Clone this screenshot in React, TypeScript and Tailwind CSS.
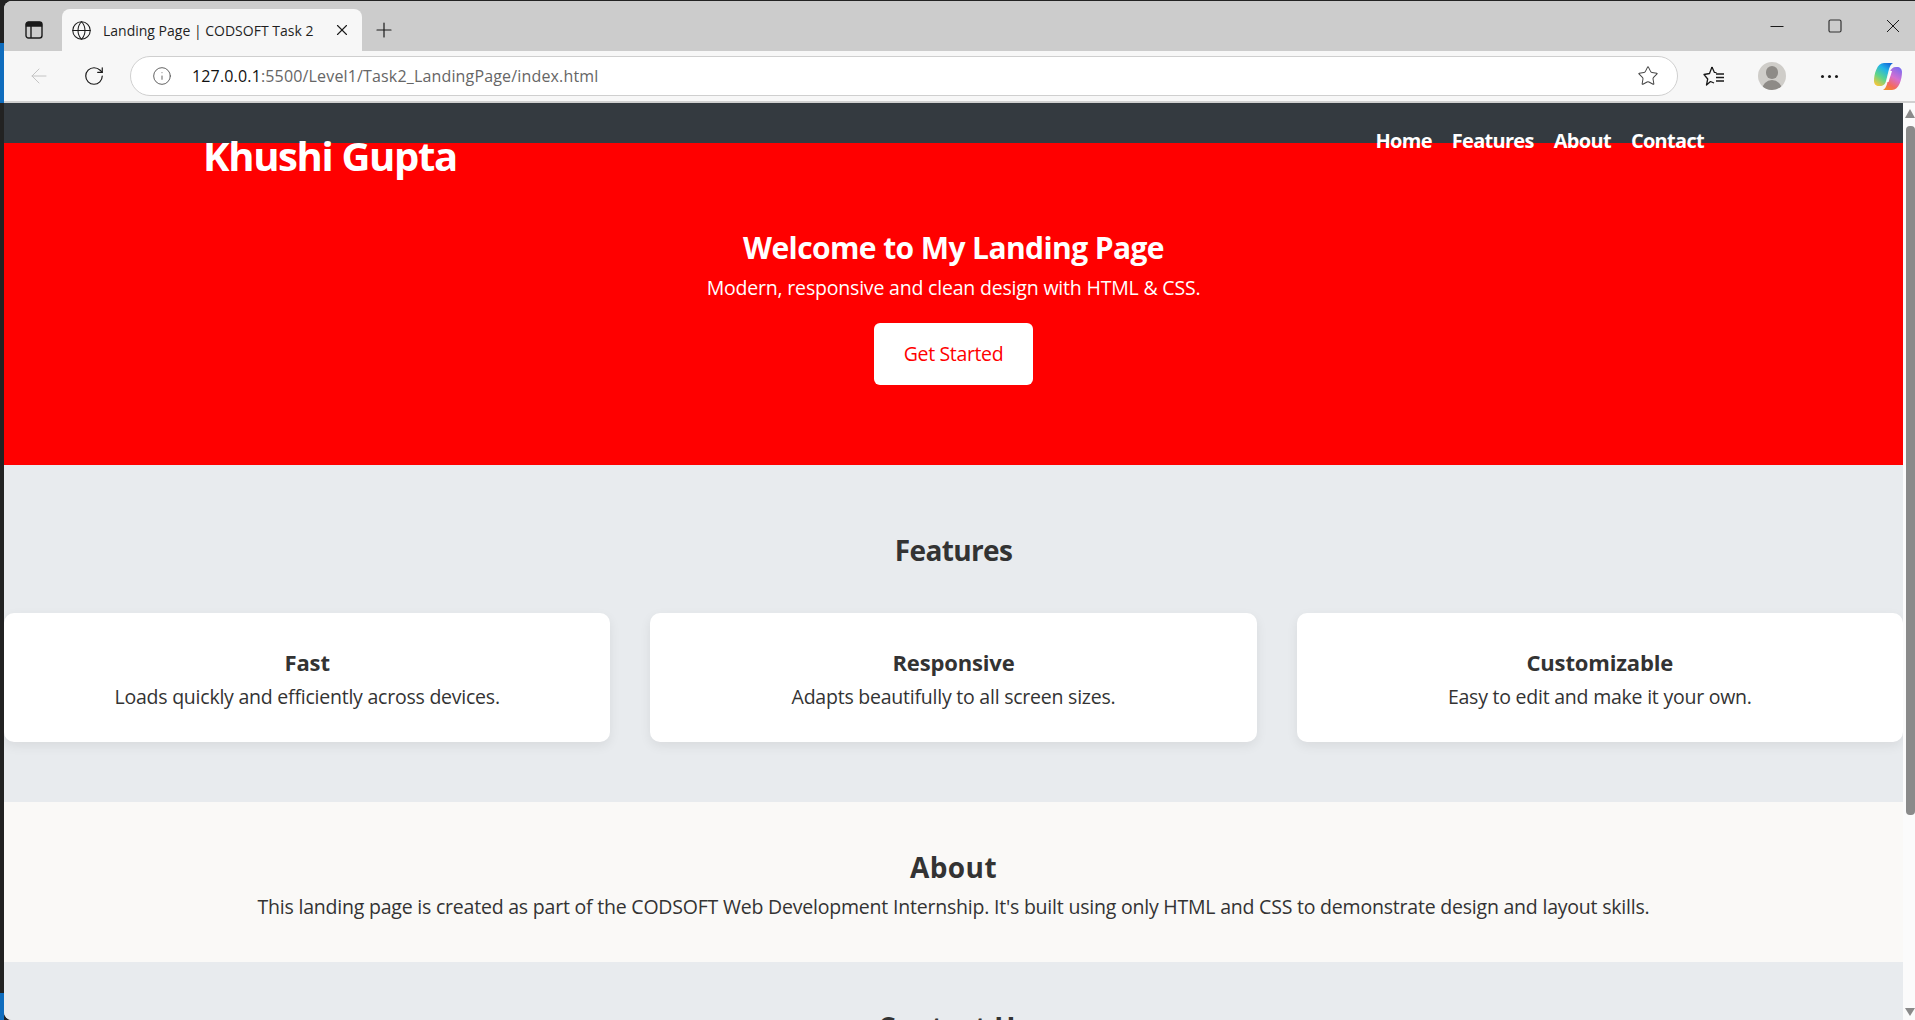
import { Globe, X, Plus, ArrowLeft, RotateCw, Info, Star } from 'lucide-react'

const features = [
  { title: 'Fast', text: 'Loads quickly and efficiently across devices.' },
  { title: 'Responsive', text: 'Adapts beautifully to all screen sizes.' },
  { title: 'Customizable', text: 'Easy to edit and make it your own.' },
]

function WindowControls() {
  return (
    <div className="ml-auto self-start flex items-center h-[50px] pr-[14px] gap-[42px]">
      <svg width="16" height="16" viewBox="0 0 16 16" fill="none" stroke="#1a1a1a" strokeWidth="1">
        <path d="M1.500 8.500h13" />
      </svg>
      <svg width="16" height="16" viewBox="0 0 16 16" fill="none" stroke="#333333" strokeWidth="1.200">
        <rect x="2" y="2" width="12" height="12" rx="1.500" />
      </svg>
      <svg width="16" height="16" viewBox="0 0 16 16" fill="none" stroke="#1a1a1a" strokeWidth="1">
        <path d="M2 2l12 12M14 2L2 14" />
      </svg>
    </div>
  )
}

function BrowserChrome() {
  return (
    <div className="shrink-0 w-full">
      {/* Tab strip */}
      <div className="h-[50px] bg-[#cccccc] flex items-end pl-[13px]">
        <div className="w-[34px] h-[42px] flex items-center justify-center">
          <svg width="18" height="18" viewBox="0 0 18 18" fill="none" stroke="#1a1a1a" strokeWidth="1.400">
            <rect x="1" y="1" width="16" height="16" rx="2.500" />
            <path d="M1.500 3.500a2 2 0 0 1 2-2h11a2 2 0 0 1 2 2V5h-15z" fill="#1a1a1a" />
            <path d="M6 5v12" />
          </svg>
        </div>
        <div className="ml-[11px] w-[300px] h-[42px] bg-[#f7f7f7] rounded-t-[8px] flex items-center pl-[9px] pr-[11px]">
          <Globe size={21} strokeWidth={1.200} className="text-[#1a1a1a] shrink-0" />
          <span className="ml-[11px] text-[14px] text-[#1f1f1f] whitespace-nowrap">Landing Page | CODSOFT Task 2</span>
          <X size={18} strokeWidth={1.500} className="ml-auto text-[#1a1a1a] shrink-0" />
        </div>
        <div className="ml-[10px] h-[42px] flex items-center">
          <Plus size={24} strokeWidth={1.200} className="text-[#1a1a1a]" />
        </div>
        <WindowControls />
      </div>
      {/* Address bar */}
      <div className="h-[52px] bg-[#f7f7f7] border-b-2 border-[#d0d0d0] flex items-center pl-[23px]">
        <ArrowLeft size={24} strokeWidth={1} className="text-[#c4c4c4]" />
        <RotateCw size={22} strokeWidth={1.300} className="ml-[32px] text-[#1a1a1a]" />
        <div className="ml-[25px] w-[1548px] h-[40px] bg-white rounded-full border border-[#cfcfcf] flex items-center pl-[21px] pr-[18px]">
          <Info size={20} strokeWidth={1.100} className="text-[#555555]" />
          <span className="ml-[20px] text-[16px] whitespace-nowrap tracking-[0.160px] text-[#666666]">
            <span className="text-[#111111]">127.0.0.1</span>:5500/Level1/Task2_LandingPage/index.html
          </span>
          <Star size={22} strokeWidth={1.100} className="ml-auto text-[#444444]" />
        </div>
        <svg className="ml-[25px]" width="22" height="22" viewBox="0 0 22 22" fill="none" stroke="#1a1a1a" strokeWidth="1.300" strokeLinejoin="round">
          <path d="M9 2l2.300 5.300 2.200.3M7.500 16.500L3.500 20l1.200-6L1 9.500 6.500 8.500 9 2M7.500 16.500l3.500 1.500" />
          <path d="M13 9h8M13 12.500h8M13 16h8" />
        </svg>
        <div className="ml-[33px] w-[28px] h-[28px] rounded-full bg-[#cfcdc9] overflow-hidden flex flex-col items-center">
          <div className="mt-[4px] w-[12px] h-[13px] rounded-full bg-[#8e8b87]" />
          <div className="mt-[1px] w-[20px] h-[10px] rounded-t-full bg-[#8e8b87]" />
        </div>
        <div className="ml-[33px] w-[20px] flex items-center justify-center gap-[4px]">
          <span className="w-[3px] h-[3px] rounded-full bg-[#1a1a1a]" />
          <span className="w-[3px] h-[3px] rounded-full bg-[#1a1a1a]" />
          <span className="w-[3px] h-[3px] rounded-full bg-[#1a1a1a]" />
        </div>
        <svg className="ml-[35px]" width="28" height="29" viewBox="0 0 28 29">
          <defs>
            <linearGradient id="cpLeft" x1="0.800" y1="0" x2="0.200" y2="1">
              <stop offset="0" stopColor="#1668d8" />
              <stop offset="0.300" stopColor="#22b4e8" />
              <stop offset="0.650" stopColor="#5fd58a" />
              <stop offset="1" stopColor="#f6c63a" />
            </linearGradient>
            <linearGradient id="cpRight" x1="0.800" y1="0" x2="0.300" y2="1">
              <stop offset="0" stopColor="#7a6cf0" />
              <stop offset="0.450" stopColor="#d56fd0" />
              <stop offset="0.800" stopColor="#f56a5c" />
              <stop offset="1" stopColor="#f08a30" />
            </linearGradient>
          </defs>
          <path d="M10 1H19C17 2 16 4 15 7L12 19C11.500 22 9 24 6 24H5C2 24 0 22 0 19C0 12 3 1 10 1z" fill="url(#cpLeft)" />
          <path d="M18 28H9C11 27 12 25 13 22L16 10C16.500 7 19 5 22 5H23C26 5 28 7 28 10C28 17 25 28 18 28z" fill="url(#cpRight)" />
          <path d="M16 9h2l-3.500 11h-2z" fill="#ffffff" />
        </svg>
      </div>
    </div>
  )
}

function Scrollbar() {
  return (
    <div className="w-[12px] shrink-0 bg-[#fbfbfb] flex flex-col items-start pl-[2px] pt-[6px] pb-[4px]">
      <div className="w-0 h-0 border-l-[5px] border-r-[5px] border-b-[9px] border-l-transparent border-r-transparent border-b-[#8a8a8a]" />
      <div className="mt-[8px] ml-[1px] w-[9px] h-[689px] rounded-[4px] bg-[#8a8a8a]" />
      <div className="mt-auto w-0 h-0 border-l-[5px] border-r-[5px] border-t-[8px] border-l-transparent border-r-transparent border-t-[#8a8a8a]" />
    </div>
  )
}

export default function App() {
  return (
    <div className="w-[1915px] h-[1020px] overflow-hidden flex bg-[#222222] pt-[1px] font-['Open_Sans',sans-serif]">
      <div className="w-[4px] shrink-0 -mt-[1px] flex flex-col">
        <div className="h-[43px]" />
        <div className="h-[60px] bg-[#0f6cbd]" />
        <div className="flex-1" />
        <div className="h-[27px] bg-[#0f6cbd]" />
      </div>
      <div className="flex-1 flex flex-col min-w-0 rounded-tl-[8px] rounded-bl-[8px] overflow-hidden bg-[#f7f7f7]">
        <BrowserChrome />
        <div className="flex-1 flex min-h-0">
          <div className="flex-1 min-w-0 overflow-hidden bg-[#e8ebee] text-[#333333]">
            {/* Header */}
            <header className="relative z-10 h-[40px] bg-[#343a40] flex items-start justify-between pl-[199px] pr-[199px] text-white">
              <div className="mt-[26px] text-[40px] leading-[54px] font-bold tracking-[-1.350px] whitespace-nowrap">Khushi Gupta</div>
              <nav className="mt-[24px] flex gap-[20px] text-[20px] leading-[27px] font-bold tracking-[-0.700px]">
                <a>Home</a>
                <a>Features</a>
                <a>About</a>
                <a>Contact</a>
              </nav>
            </header>

            {/* Hero */}
            <section className="h-[322px] bg-[#ff0000] text-white text-center pt-[83px]">
              <h1 className="text-[30px] leading-[44px] font-bold tracking-[-0.600px]">Welcome to My Landing Page</h1>
              <p className="mt-[4px] text-[19.500px] leading-[28px] tracking-[-0.190px]">Modern, responsive and clean design with HTML &amp; CSS.</p>
              <button className="mt-[21px] w-[159px] h-[62px] bg-white text-[#ff0000] rounded-[6px] text-[19.500px] tracking-[-0.350px]">Get Started</button>
            </section>

            {/* Features */}
            <section className="h-[337px] pt-[64px] text-center">
              <h2 className="text-[28px] leading-[42px] font-bold tracking-[-0.650px]">Features</h2>
              <div className="mt-[42px] grid grid-cols-3 gap-[40px]">
                {features.map(f => (
                  <div key={f.title} className="h-[129px] bg-white rounded-[10px] shadow-[0_4px_12px_rgba(0,0,0,0.07)] pt-[32px]">
                    <h3 className="text-[22px] leading-[34px] font-bold tracking-[-0.150px]">{f.title}</h3>
                    <p className="mt-[1px] text-[19.500px] leading-[33px] tracking-[-0.230px]">{f.text}</p>
                  </div>
                ))}
              </div>
            </section>

            {/* About */}
            <section className="h-[160px] bg-[#faf9f7] pt-[44px] text-center">
              <h2 className="text-[28px] leading-[42px] font-bold tracking-[0.400px]">About</h2>
              <p className="mt-[1px] text-[19.500px] leading-[36px] tracking-[-0.210px]">This landing page is created as part of the CODSOFT Web Development Internship. It's built using only HTML and CSS to demonstrate design and layout skills.</p>
            </section>

            {/* Contact */}
            <section className="pt-[44px] text-center">
              <h2 className="text-[28px] leading-[42px] font-bold tracking-[0px]">Contact Us</h2>
            </section>
          </div>
          <Scrollbar />
        </div>
      </div>
    </div>
  )
}
